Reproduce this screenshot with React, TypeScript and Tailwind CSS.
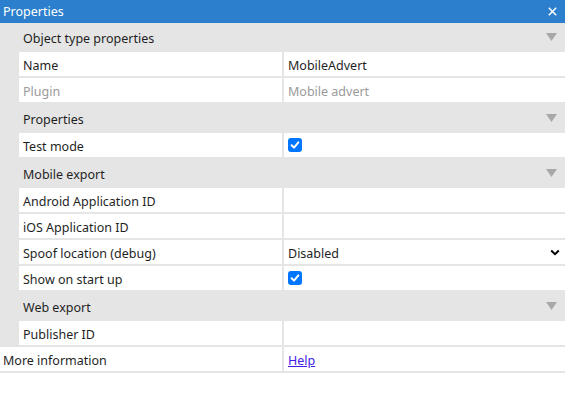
import type { ReactNode } from "react";

type Row = {
  label: string;
  value?: ReactNode;
  disabled?: boolean;
};

type Section = {
  title: string;
  rows: Row[];
};

function Check() {
  return (
    <span className="flex h-[14px] w-[14px] items-center justify-center rounded-[3px] bg-[#0075ff]">
      <svg width="10" height="10" viewBox="0 0 10 10">
        <path d="M1.6 5.2 L4 7.6 L8.4 2.4" fill="none" stroke="white" strokeWidth="2" strokeLinecap="round" strokeLinejoin="round" />
      </svg>
    </span>
  );
}

function Dropdown({ value }: { value: string }) {
  return (
    <div className="flex w-full items-center justify-between pr-[5px]">
      <span className="pt-[4px]">{value}</span>
      <svg width="10" height="7" viewBox="0 0 10 7">
        <path d="M1.2 1.5 L5 5.2 L8.8 1.5" fill="none" stroke="black" strokeWidth="2" />
      </svg>
    </div>
  );
}

const sections: Section[] = [
  {
    title: "Object type properties",
    rows: [
      { label: "Name", value: <span className="pt-[4px]">MobileAdvert</span> },
      { label: "Plugin", value: <span className="pt-[4px]">Mobile advert</span>, disabled: true },
    ],
  },
  {
    title: "Properties",
    rows: [{ label: "Test mode", value: <Check /> }],
  },
  {
    title: "Mobile export",
    rows: [
      { label: "Android Application ID" },
      { label: "iOS Application ID" },
      { label: "Spoof location (debug)", value: <Dropdown value="Disabled" /> },
      { label: "Show on start up", value: <Check /> },
    ],
  },
  {
    title: "Web export",
    rows: [{ label: "Publisher ID" }],
  },
];

export default function App() {
  return (
    <main
      className="h-[399px] w-[565px] overflow-hidden bg-white text-[12.5px] text-[#1f1f1f]"
      style={{ fontFamily: '"Noto Sans", "Open Sans", sans-serif' }}
    >
      <div className="flex h-[23px] items-center justify-between bg-[#2b7fcd] pl-[3px] pr-[8px] text-white">
        <span className="pt-[1px]">Properties</span>
        <svg width="9" height="9" viewBox="0 0 9 9">
          <path d="M0.8 0.8 L8.2 8.2 M8.2 0.8 L0.8 8.2" stroke="white" strokeWidth="1.5" />
        </svg>
      </div>

      {sections.map((s) => (
        <div key={s.title}>
          <div className="flex h-[29px] items-center justify-between bg-[#e5e5e5] pl-[23px] pr-[8px]">
            <span className="pt-[4px]">{s.title}</span>
            <svg width="11" height="8" viewBox="0 0 11 8" className="mb-[2px]">
              <path d="M0 0 H11 L5.5 8 Z" fill="#a8a8a8" />
            </svg>
          </div>
          {s.rows.map((r) => (
            <div key={r.label} className="flex h-[26px] gap-[2px] bg-[#e5e5e5] pb-[2px] pl-[19px]">
              <div
                className={
                  "flex w-[263px] items-center bg-white pl-[4px] " +
                  (r.disabled ? "text-[#9a9a9a]" : "")
                }
              >
                <span className="pt-[4px]">{r.label}</span>
              </div>
              <div
                className={
                  "flex flex-1 items-center bg-white pl-[4px] " +
                  (r.disabled ? "text-[#9a9a9a]" : "")
                }
              >
                {r.value}
              </div>
            </div>
          ))}
        </div>
      ))}

      <div className="flex h-[26px] gap-[2px] bg-[#e5e5e5] pb-[2px]">
        <div className="flex w-[282px] items-center bg-white pl-[3px]">
          <span className="pt-[4px]">More information</span>
        </div>
        <div className="flex flex-1 items-center bg-white pl-[4px]">
          <a href="#" className="pt-[4px] text-[#3f22e6] underline">
            Help
          </a>
        </div>
      </div>
    </main>
  );
}
